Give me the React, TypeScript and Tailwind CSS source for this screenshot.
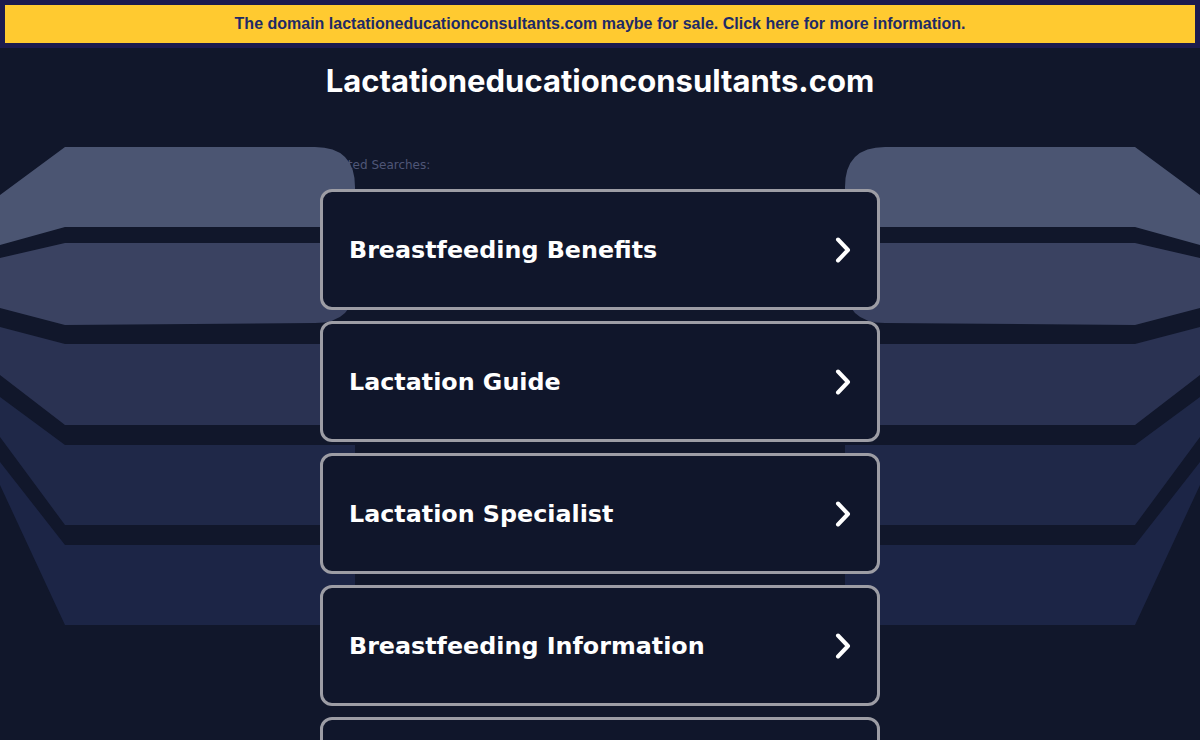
import React from "react";

const searches = [
  "Breastfeeding Benefits",
  "Lactation Guide",
  "Lactation Specialist",
  "Breastfeeding Information",
];

// left half of the background artwork, mirrored for the right side
const bands = [
  { d: "M0,195 L65,147 L315,147 Q355,147 355,187 L355,227 L65,227 L0,245 Z", fill: "#4b5572" },
  { d: "M0,258 L65,243 L355,243 L355,283 Q355,323 315,323 L65,325 L0,308 Z", fill: "#3a4261" },
  { d: "M0,327 L65,344 L355,344 L355,425 L65,425 L0,375 Z", fill: "#2a3252" },
  { d: "M0,397 L65,445 L355,445 L355,525 L65,525 L0,437 Z", fill: "#1f2848" },
  { d: "M0,462 L65,545 L355,545 L355,585 Q355,625 325,625 L65,625 L0,485 Z", fill: "#1c2546" },
];

const Backdrop = () => (
  <svg
    className="absolute top-0 left-0 pointer-events-none"
    width="1200"
    height="740"
    viewBox="0 0 1200 740"
  >
    {bands.map((b, i) => (
      <path key={`l${i}`} d={b.d} fill={b.fill} />
    ))}
    <g transform="translate(1200,0) scale(-1,1)">
      {bands.map((b, i) => (
        <path key={`r${i}`} d={b.d} fill={b.fill} />
      ))}
    </g>
  </svg>
);

const Chevron = () => (
  <svg width="16" height="26" viewBox="0 0 16 26" className="shrink-0">
    <path
      d="M3,2.5 L13,13 L3,23.5"
      fill="none"
      stroke="#ffffff"
      strokeWidth="4"
      strokeLinecap="round"
      strokeLinejoin="round"
    />
  </svg>
);

export default function App() {
  return (
    <div className="relative w-[1200px] h-[740px] overflow-hidden bg-[#11172b]">
      <div className="bg-[#1c1b4e] p-[5px]">
        <div className="h-[38px] bg-[#ffca30] flex items-center justify-center font-['Liberation_Sans',Arial,sans-serif] font-bold text-[16px] text-[#1e2a66]">
          The domain lactationeducationconsultants.com maybe for sale. Click here for more information.
        </div>
      </div>

      <h1 className="mt-[15px] text-center font-['Inter',sans-serif] font-bold text-[31px] leading-[36px] text-white">
        Lactationeducationconsultants.com
      </h1>

      <div className="w-[560px] mx-auto">
        <div className="mt-[58px] h-[16px] pl-[2px] font-['DejaVu_Sans',Verdana,sans-serif] text-[12px] leading-[16px] text-[#4f5677]">
          Related Searches:
        </div>

        <Backdrop />

        <div className="relative z-10 mt-[16px] flex flex-col gap-[11px]">
          {searches.map((s) => (
            <a
              key={s}
              href="#"
              className="h-[121px] shrink-0 flex items-center justify-between rounded-[12px] border-[3px] border-[#9d9da5] bg-[#10162b] pl-[26px] pr-[26px]"
            >
              <span className="pt-[2px] font-['DejaVu_Sans',Verdana,sans-serif] font-bold text-[23.8px] text-white">
                {s}
              </span>
              <Chevron />
            </a>
          ))}
          <div className="h-[121px] shrink-0 rounded-[12px] border-[3px] border-[#9d9da5] bg-[#10162b]" />
        </div>
      </div>
    </div>
  );
}
